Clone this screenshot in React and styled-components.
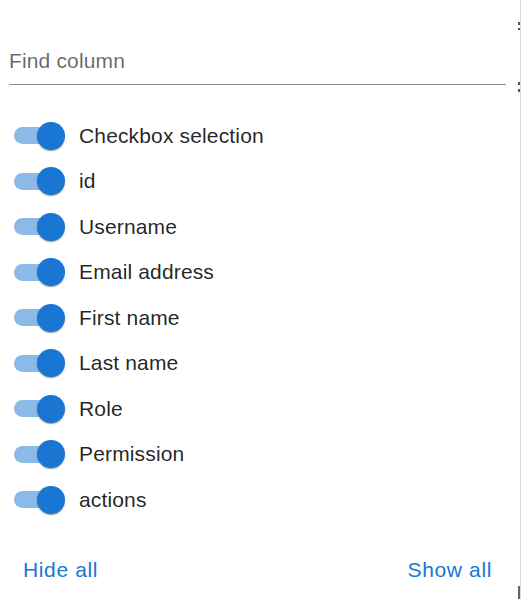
import React from 'react';
import styled, { createGlobalStyle } from 'styled-components';

const GlobalStyle = createGlobalStyle`
  html, body { margin: 0; padding: 0; background: #fff; }
  body { font-family: "Liberation Sans", Arial, sans-serif; }
`;

const Page = styled.div`
  display: flex;
  width: 521px;
  height: 599px;
  overflow: hidden;
`;

const Panel = styled.div`
  width: 519px;
  display: flex;
  flex-direction: column;
`;

const Edge = styled.div`
  width: 2px;
  display: flex;
  flex-direction: column;
  align-items: flex-end;
  border-right: 1px solid #d9d9d9;
  box-sizing: border-box;
`;

const EdgeMark = styled.div`
  width: 2px;
  height: ${p => p.h}px;
  margin-top: ${p => p.top}px;
  background: ${p => p.color || '#555'};
`;

const SearchBox = styled.div`
  margin: 40px 13px 0 9px;
  height: 45px;
  display: flex;
  align-items: center;
  border-bottom: 1px solid rgba(0, 0, 0, 0.45);
  box-sizing: border-box;
  padding-bottom: 2px;
`;

const SearchInput = styled.input`
  border: 0;
  outline: none;
  padding: 0;
  width: 100%;
  font-family: "Liberation Sans", Arial, sans-serif;
  font-size: 21px;
  letter-spacing: 0.15px;
  color: rgba(0, 0, 0, 0.87);
  background: transparent;
  &::placeholder { color: rgba(0, 0, 0, 0.6); opacity: 1; }
`;

const List = styled.div`
  display: flex;
  flex-direction: column;
  margin-top: 28px;
  padding-left: 14px;
`;

const Row = styled.label`
  height: 45.5px;
  display: flex;
  align-items: center;
  gap: 14px;
  cursor: pointer;
`;

const SwitchRoot = styled.span`
  display: flex;
  align-items: center;
`;

const Track = styled.span`
  width: 44px;
  height: 17px;
  border-radius: 9px;
  background: ${p => (p.on ? '#8cbae8' : '#bdbdbd')};
`;

const Thumb = styled.span`
  width: 28px;
  height: 28px;
  border-radius: 50%;
  margin-left: -21px;
  background: ${p => (p.on ? '#1976d2' : '#fafafa')};
  box-shadow: 0 2px 1px -1px rgba(0,0,0,0.2), 0 1px 1px 0 rgba(0,0,0,0.14), 0 1px 3px 0 rgba(0,0,0,0.12);
`;

const Label = styled.span`
  font-size: 21px;
  letter-spacing: 0.15px;
  color: rgba(0, 0, 0, 0.87);
`;

const Footer = styled.div`
  margin-top: auto;
  height: 58px;
  display: flex;
  justify-content: space-between;
  align-items: center;
  padding: 0 16px 0 12px;
`;

const TextButton = styled.button`
  border: 0;
  background: none;
  padding: 0 11px;
  height: 28px;
  font-family: "Liberation Sans", Arial, sans-serif;
  font-size: 21px;
  letter-spacing: 0.03em;
  color: #1976d2;
  cursor: pointer;
`;

const columns = [
  'Checkbox selection',
  'id',
  'Username',
  'Email address',
  'First name',
  'Last name',
  'Role',
  'Permission',
  'actions',
];

const Switch = ({ on }) => (
  <SwitchRoot>
    <Track on={on} />
    <Thumb on={on} />
  </SwitchRoot>
);

export default function App() {
  return (
    <Page>
      <GlobalStyle />
      <Panel>
        <SearchBox>
          <SearchInput placeholder="Find column" />
        </SearchBox>
        <List>
          {columns.map(c => (
            <Row key={c}>
              <Switch on />
              <Label>{c}</Label>
            </Row>
          ))}
        </List>
        <Footer>
          <TextButton>Hide all</TextButton>
          <TextButton>Show all</TextButton>
        </Footer>
      </Panel>
      <Edge>
        <EdgeMark top={22} h={3} />
        <EdgeMark top={3} h={3} />
        <EdgeMark top={52} h={3} />
        <EdgeMark top={4} h={3} />
        <EdgeMark top={494} h={15} color="#666" />
      </Edge>
    </Page>
  );
}
